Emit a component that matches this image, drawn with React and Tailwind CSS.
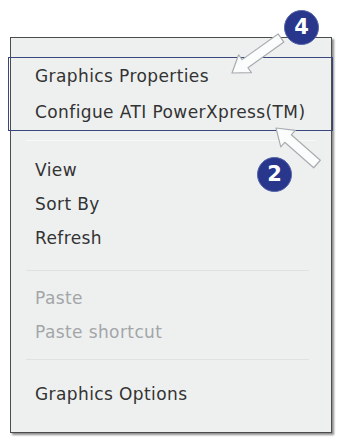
import React from 'react';

const Item = ({ label, muted }) => (
  <div
    className={`h-[34px] flex items-center pt-[5px] pl-[24px] text-[17px] tracking-[0.4px] ${
      muted ? 'text-[#a3a6a8]' : 'text-[#333333]'
    }`}
  >
    {label}
  </div>
);

const Badge = ({ n, className }) => (
  <div
    className={`absolute w-[35px] h-[35px] rounded-full bg-[#28368c] border border-[#5563a8] flex items-center justify-center text-white font-bold text-[21px] ${className}`}
  >
    {n}
  </div>
);

const Arrow = ({ x1, y1, x2, y2 }) => {
  const angle = (Math.atan2(y2 - y1, x2 - x1) * 180) / Math.PI;
  const len = Math.hypot(x2 - x1, y2 - y1);
  return (
    <g transform={`translate(${x1} ${y1}) rotate(${angle})`}>
      <path
        d={`M0 -5 L${len - 16} -5 L${len - 16} -11 L${len} 0 L${len - 16} 11 L${len - 16} 5 L0 5 Z`}
        fill="#fbfcfc"
        stroke="#a9adb0"
        strokeWidth="1.2"
        strokeLinejoin="round"
      />
    </g>
  );
};

export default function App() {
  return (
    <div
      className="relative w-[340px] h-[437px] bg-white overflow-hidden"
      style={{ fontFamily: '"DejaVu Sans", "Liberation Sans", sans-serif' }}
    >
      <div className="ml-[10px] mt-[37px] w-[322px] h-[396px] bg-[#eef0f0] border border-[#4a4c4e] shadow-[2px_2px_2px_rgba(0,0,0,0.45)] pt-[19px]">
        <div className="h-[36px] flex items-center pt-[4px] pl-[24px] text-[17px] tracking-[0.4px] text-[#333333]">
          Graphics Properties
        </div>
        <div className="h-[36px] flex items-center pt-[4px] pl-[24px] text-[17px] tracking-[0.4px] text-[#333333]">
          Configue ATI PowerXpress(TM)
        </div>
        <div className="h-[22px] flex items-center px-[15px]">
          <div className="h-px w-full bg-[#f7f9f4]" />
        </div>
        <Item label="View" />
        <Item label="Sort By" />
        <Item label="Refresh" />
        <div className="pt-[17px] pb-[8px] pl-[15px] pr-[22px]">
          <div className="h-px bg-[#dfe2e3]" />
        </div>
        <Item label="Paste" muted />
        <Item label="Paste shortcut" muted />
        <div className="pt-[12px] pb-[15px] pl-[15px] pr-[22px]">
          <div className="h-px bg-[#dfe2e3]" />
        </div>
        <Item label="Graphics Options" />
      </div>

      <div className="absolute left-[8px] top-[57px] w-[325px] h-[74px] border border-[#3a477c]" />

      <svg className="absolute left-0 top-0" width="340" height="437">
        <Arrow x1={281} y1={38} x2={232} y2={73} />
        <Arrow x1={317} y1={164} x2={276} y2={128} />
      </svg>

      <Badge n="4" className="left-[284px] top-[10px]" />
      <Badge n="2" className="left-[257px] top-[157px]" />
    </div>
  );
}
